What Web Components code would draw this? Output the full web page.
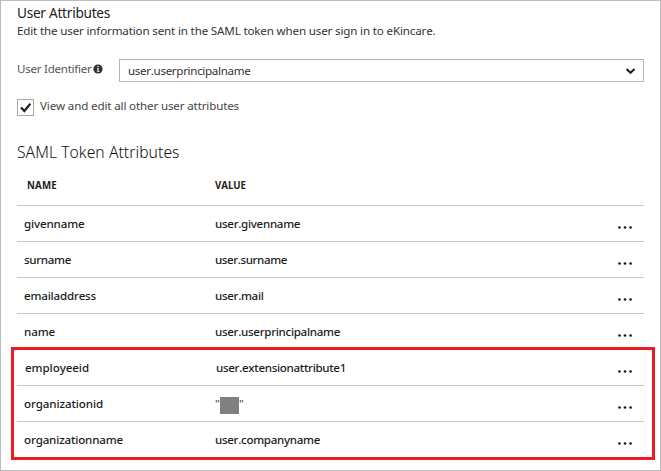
<!DOCTYPE html>
<html lang="en">
<head>
<meta charset="utf-8">
<title>User Attributes</title>
<style>
  html, body { margin: 0; height: 100%; background: #fff; }
  body { font-family: "Noto Sans", "Open Sans", sans-serif; font-kerning: none; color: #222; overflow: hidden; }
</style>
</head>
<body>
<attributes-panel></attributes-panel>
<script>
const define = (name, markup, setup) => customElements.define(name, class extends HTMLElement {
  connectedCallback() {
    if (this.shadowRoot) return;
    this.attachShadow({ mode: 'open' }).innerHTML = markup;
    if (setup) setup(this, this.shadowRoot);
  }
});

// One line of text whose tracking is adjusted to reach a given width.
define('text-line', `
  <style>:host{display:block;white-space:nowrap;line-height:20px} span{display:inline-block}</style>
  <span></span>`, (host, root) => {
  const span = root.querySelector('span');
  span.textContent = host.getAttribute('text');
  const width = parseFloat(host.getAttribute('width'));
  if (width) {
    const natural = span.getBoundingClientRect().width;
    span.style.letterSpacing = (width - natural) / span.textContent.length + 'px';
  }
});

define('info-icon', `
  <style>:host{display:block;width:10px;height:10px} svg{display:block}</style>
  <svg width="10" height="10" viewBox="0 0 10 10"><circle cx="5" cy="5" r="4.6" fill="#333"/>
  <path d="M4 4.3h1.7V7H6.4v.8H3.9V7h.6V5H4zM4.4 2h1.3v1.3H4.4z" fill="#fff"/></svg>`);

define('select-box', `
  <style>
    :host{display:flex;box-sizing:border-box;width:525px;height:23px;border:1px solid #b5b5b5;
      padding:0 8px;align-items:center;justify-content:space-between;font-size:11.6px;color:#333}
    svg{display:block;margin-right:-.5px}
  </style>
  <slot></slot>
  <svg width="11" height="8" viewBox="0 0 11 8"><path d="M1.5 2 5.5 5.8 9.5 2" fill="none" stroke="#222" stroke-width="2.1"/></svg>`);

define('check-box', `
  <style>
    :host{display:flex;gap:6px;height:17px;font-size:11.6px;color:#444}
    .box{box-sizing:border-box;width:17px;height:17px;border:1px solid #a9a9a9}
    svg{display:block} .label{margin-top:-3px}
  </style>
  <div class="box"><svg width="15" height="15" viewBox="0 0 15 15"><path d="M3 7.4 6.4 11 12.3 3.8" fill="none" stroke="#222" stroke-width="2.2"/></svg></div>
  <div class="label"><slot></slot></div>`);

define('more-button', `
  <style>:host{display:block;width:16px;height:4px} svg{display:block}</style>
  <svg width="16" height="4" viewBox="0 0 16 4" fill="#1c1c2c"><circle cx="1.5" cy="1.5" r="1.35"/><circle cx="7" cy="1.5" r="1.35"/><circle cx="12.6" cy="1.5" r="1.35"/></svg>`);

define('attribute-row', `
  <style>
    :host{display:grid;box-sizing:border-box;grid-template-columns:191px 1fr 16px;height:36px;
      padding:8px 10px 0 7px;border-bottom:1px solid #c6c6c6;font-size:11.6px;font-weight:500;color:#1c1c1c}
    :host([last]){border-bottom:0}
    :host([shifted]){padding-left:8px}
    more-button{margin-top:12px}
    .value{display:flex}
    .mask{width:19px;height:17px;background:#808080;margin-top:3px}
    .quote{width:5px;font-weight:400;color:#55404a}
  </style>
  <text-line class="name"></text-line><div class="value"></div><more-button></more-button>`, (host, root) => {
  const name = root.querySelector('.name');
  const fill = (el, text, width) => {
    const line = document.createElement('text-line');
    line.setAttribute('text', text);
    line.setAttribute('width', width);
    el.replaceWith(line);
    return line;
  };
  fill(name, host.getAttribute('name'), host.getAttribute('nw'));
  const value = root.querySelector('.value');
  if (host.hasAttribute('masked')) {
    value.innerHTML = '<text-line class="quote" text="&quot;"></text-line><div class="mask"></div><text-line class="quote" text="&quot;"></text-line>';
  } else {
    const slot = document.createElement('i');
    value.append(slot);
    fill(slot, host.getAttribute('value'), host.getAttribute('vw'));
  }
});

define('attribute-table', `
  <style>
    :host{display:block;width:627px}
    .head{display:grid;box-sizing:border-box;grid-template-columns:188px 1fr;height:31px;
      padding:1px 0 0 10px;border-bottom:1px solid #c6c6c6;font-size:9.7px;font-weight:700;color:#222}
  </style>
  <div class="head"><text-line text="NAME" width="30"></text-line><text-line text="VALUE" width="31"></text-line></div>
  <slot></slot>`);

define('attributes-panel', `
  <style>
    :host{display:flex;flex-direction:column;box-sizing:border-box;width:661px;height:471px;
      border:1px solid #bcbcbc;padding:2px 16px 0;position:relative}
    .title{font-size:13.6px;height:18px}
    .sub{font-size:11.6px;height:38px;color:#333}
    .field{display:flex;height:23px}
    .field>.label{font-size:11.6px;width:76px;color:#555}
    info-icon{margin:5px 16px 0 0}
    check-box{margin-top:17px}
    .heading{font-size:15.7px;font-weight:300;color:#111;margin-top:26px;height:33px}
    .outline{position:absolute;left:10px;top:346px;width:644px;height:113px;box-sizing:border-box;border:3px solid #ed1c24}
  </style>
  <text-line class="title" text="User Attributes" width="93"></text-line>
  <text-line class="sub" text="Edit the user information sent in the SAML token when user sign in to eKincare." width="418.5"></text-line>
  <div class="field">
    <text-line class="label" text="User Identifier" width="74.5"></text-line>
    <info-icon></info-icon>
    <select-box><text-line text="user.userprincipalname" width="122.5"></text-line></select-box>
  </div>
  <check-box><text-line text="View and edit all other user attributes" width="199"></text-line></check-box>
  <text-line class="heading" text="SAML Token Attributes" width="162.5"></text-line>
  <attribute-table>
    <attribute-row name="givenname" nw="60.5" value="user.givenname" vw="85.2"></attribute-row>
    <attribute-row name="surname" nw="47" value="user.surname" vw="72"></attribute-row>
    <attribute-row name="emailaddress" nw="72" value="user.mail" vw="48.5"></attribute-row>
    <attribute-row name="name" nw="31" value="user.userprincipalname" vw="125"></attribute-row>
    <attribute-row shifted name="employeeid" nw="64" value="user.extensionattribute1" vw="130"></attribute-row>
    <attribute-row name="organizationid" nw="79" masked></attribute-row>
    <attribute-row last name="organizationname" nw="99" value="user.companyname" vw="105"></attribute-row>
  </attribute-table>
  <div class="outline"></div>`);
</script>
</body>
</html>
